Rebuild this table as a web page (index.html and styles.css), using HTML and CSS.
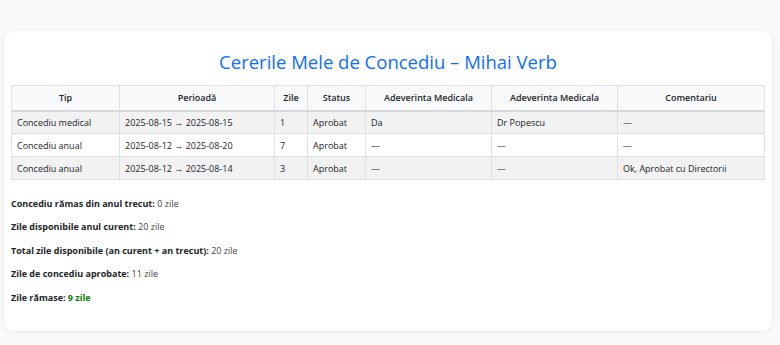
FILE: index.html
```html
<!DOCTYPE html>
<html lang="ro">
<head>
  <meta charset="UTF-8">
  <meta name="viewport" content="width=device-width, initial-scale=1.0">
  <title>Cererile Mele de Concediu</title>
  <link rel="stylesheet" href="styles.css">
</head>
<body>
  <div class="card">
    <h2 class="title">Cererile Mele de Concediu – Mihai Verb</h2>
    <table class="leaves">
      <colgroup>
        <col class="c-tip">
        <col class="c-per">
        <col class="c-zile">
        <col class="c-status">
        <col class="c-adev">
        <col class="c-adev">
        <col>
      </colgroup>
      <thead>
        <tr>
          <th>Tip</th>
          <th>Perioadă</th>
          <th>Zile</th>
          <th>Status</th>
          <th>Adeverinta Medicala</th>
          <th>Adeverinta Medicala</th>
          <th>Comentariu</th>
        </tr>
      </thead>
      <tbody>
        <tr>
          <td>Concediu medical</td>
          <td>2025-08-15 → 2025-08-15</td>
          <td>1</td>
          <td>Aprobat</td>
          <td>Da</td>
          <td>Dr Popescu</td>
          <td>—</td>
        </tr>
        <tr>
          <td>Concediu anual</td>
          <td>2025-08-12 → 2025-08-20</td>
          <td>7</td>
          <td>Aprobat</td>
          <td>—</td>
          <td>—</td>
          <td>—</td>
        </tr>
        <tr>
          <td>Concediu anual</td>
          <td>2025-08-12 → 2025-08-14</td>
          <td>3</td>
          <td>Aprobat</td>
          <td>—</td>
          <td>—</td>
          <td>Ok, Aprobat cu Directorii</td>
        </tr>
      </tbody>
    </table>

    <div class="summary">
      <p><strong>Concediu rămas din anul trecut:</strong> 0 zile</p>
      <p><strong>Zile disponibile anul curent:</strong> 20 zile</p>
      <p><strong>Total zile disponibile (an curent + an trecut):</strong> 20 zile</p>
      <p><strong>Zile de concediu aprobate:</strong> 11 zile</p>
      <p><strong>Zile rămase:</strong> <span class="left">9 zile</span></p>
    </div>
  </div>
</body>
</html>
```

FILE: styles.css
```css
* {
  box-sizing: border-box;
}
body {
  margin: 0;
  padding: 31px 8px 14px 4px;
  font-family: 'Open Sans', 'Noto Sans', sans-serif;
  font-size: 9px;
  color: #212529;
  background: #fafafa;
}
.card {
  background: #fff;
  border-radius: 10px;
  box-shadow: 0 1px 6px rgba(0, 0, 0, 0.06);
  padding: 8px 7px 20px;
  height: 300px;
}
.title {
  margin: 11px 0;
  text-align: center;
  font-size: 18.5px;
  line-height: 24px;
  font-weight: 500;
  color: #0d6efd;
}
.leaves {
  width: 754px;
  border-collapse: collapse;
  table-layout: fixed;
}
.c-tip { width: 108px; }
.c-per { width: 155px; }
.c-zile { width: 33px; }
.c-status { width: 58px; }
.c-adev { width: 126px; }
.leaves th,
.leaves td {
  border: 1px solid #dee2e6;
  padding: 0 5px;
  height: 23px;
  text-align: left;
  white-space: nowrap;
}
.leaves th {
  height: 25px;
  background: #f8f9fa;
  text-align: center;
  font-weight: 600;
  border-bottom: 2px solid #d6d9dc;
}
.leaves tbody tr:nth-child(odd) td {
  background: #f2f2f2;
}
.summary {
  margin-top: 17px;
}
.summary p {
  margin: 0 0 9.4px;
  line-height: 14px;
  color: #444;
}
.summary strong {
  color: #212529;
  font-weight: 700;
}
.left {
  color: #008000;
  font-weight: 700;
}
```
